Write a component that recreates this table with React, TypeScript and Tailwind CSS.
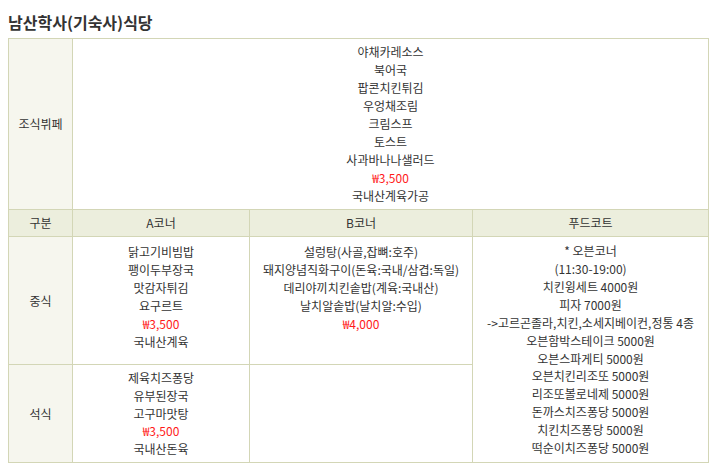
import React from 'react';

type Line = { text: string; price?: boolean };

const breakfast: Line[] = [
  { text: '야채카레소스' },
  { text: '북어국' },
  { text: '팝콘치킨튀김' },
  { text: '우엉채조림' },
  { text: '크림스프' },
  { text: '토스트' },
  { text: '사과바나나샐러드' },
  { text: '₩3,500', price: true },
  { text: '국내산계육가공' },
];

const lunchA: Line[] = [
  { text: '닭고기비빔밥' },
  { text: '팽이두부장국' },
  { text: '맛감자튀김' },
  { text: '요구르트' },
  { text: '₩3,500', price: true },
  { text: '국내산계육' },
];

const lunchB: Line[] = [
  { text: '설렁탕(사골,잡뼈:호주)' },
  { text: '돼지양념직화구이(돈육:국내/삼겹:독일)' },
  { text: '데리야끼치킨솥밥(계육:국내산)' },
  { text: '날치알솥밥(날치알:수입)' },
  { text: '₩4,000', price: true },
];

const dinnerA: Line[] = [
  { text: '제육치즈퐁당' },
  { text: '유부된장국' },
  { text: '고구마맛탕' },
  { text: '₩3,500', price: true },
  { text: '국내산돈육' },
];

const foodCourt: Line[] = [
  { text: '* 오븐코너' },
  { text: '(11:30-19:00)' },
  { text: '치킨윙세트 4000원' },
  { text: '피자 7000원' },
  { text: '->고르곤졸라,치킨,소세지베이컨,정통 4종' },
  { text: '오븐함박스테이크 5000원' },
  { text: '오븐스파게티 5000원' },
  { text: '오븐치킨리조또 5000원' },
  { text: '리조또볼로네제 5000원' },
  { text: '돈까스치즈퐁당 5000원' },
  { text: '치킨치즈퐁당 5000원' },
  { text: '떡순이치즈퐁당 5000원' },
];

const MenuLines = ({ lines }: { lines: Line[] }) => (
  <div className="flex flex-col items-center leading-[17.9px]">
    {lines.map((l, i) => (
      <span key={i} className={l.price ? 'text-[#ff1a1a]' : ''}>
        {l.text}
      </span>
    ))}
  </div>
);

const td = 'border border-[#d3d6b6] text-center';
const label = `${td} bg-[#f6f6ee] align-middle`;

export default function App() {
  return (
    <div
      className="bg-white px-2 text-[#333] min-h-[475px]"
      style={{ fontFamily: '"Noto Sans CJK KR", "Noto Sans", sans-serif' }}
    >
      <h2 className="pt-[12px] mb-[6px] text-[16px] leading-[20px] font-semibold text-[#333]">
        남산학사(기숙사)식당
      </h2>
      <table className="w-[700px] table-fixed border-collapse text-[12px]">
        <colgroup>
          <col className="w-[64px]" />
          <col className="w-[177px]" />
          <col className="w-[223px]" />
          <col className="w-[236px]" />
        </colgroup>
        <tbody>
          <tr className="h-[171px]">
            <td className={label}>조식뷔페</td>
            <td colSpan={3} className={`${td} py-[4px] align-middle`}>
              <MenuLines lines={breakfast} />
            </td>
          </tr>
          <tr className="h-[27px] bg-[#eceedd]">
            <td className={td}>구분</td>
            <td className={td}>A코너</td>
            <td className={td}>B코너</td>
            <td className={td}>푸드코트</td>
          </tr>
          <tr className="h-[128px]">
            <td className={label}>중식</td>
            <td className={`${td} align-top pt-[6px]`}>
              <MenuLines lines={lunchA} />
            </td>
            <td className={`${td} align-top pt-[6px]`}>
              <MenuLines lines={lunchB} />
            </td>
            <td rowSpan={2} className={`${td} align-middle py-[4px]`}>
              <MenuLines lines={foodCourt} />
            </td>
          </tr>
          <tr className="h-[98px]">
            <td className={label}>석식</td>
            <td className={`${td} align-middle`}>
              <MenuLines lines={dinnerA} />
            </td>
            <td className={td}></td>
          </tr>
        </tbody>
      </table>
    </div>
  );
}
